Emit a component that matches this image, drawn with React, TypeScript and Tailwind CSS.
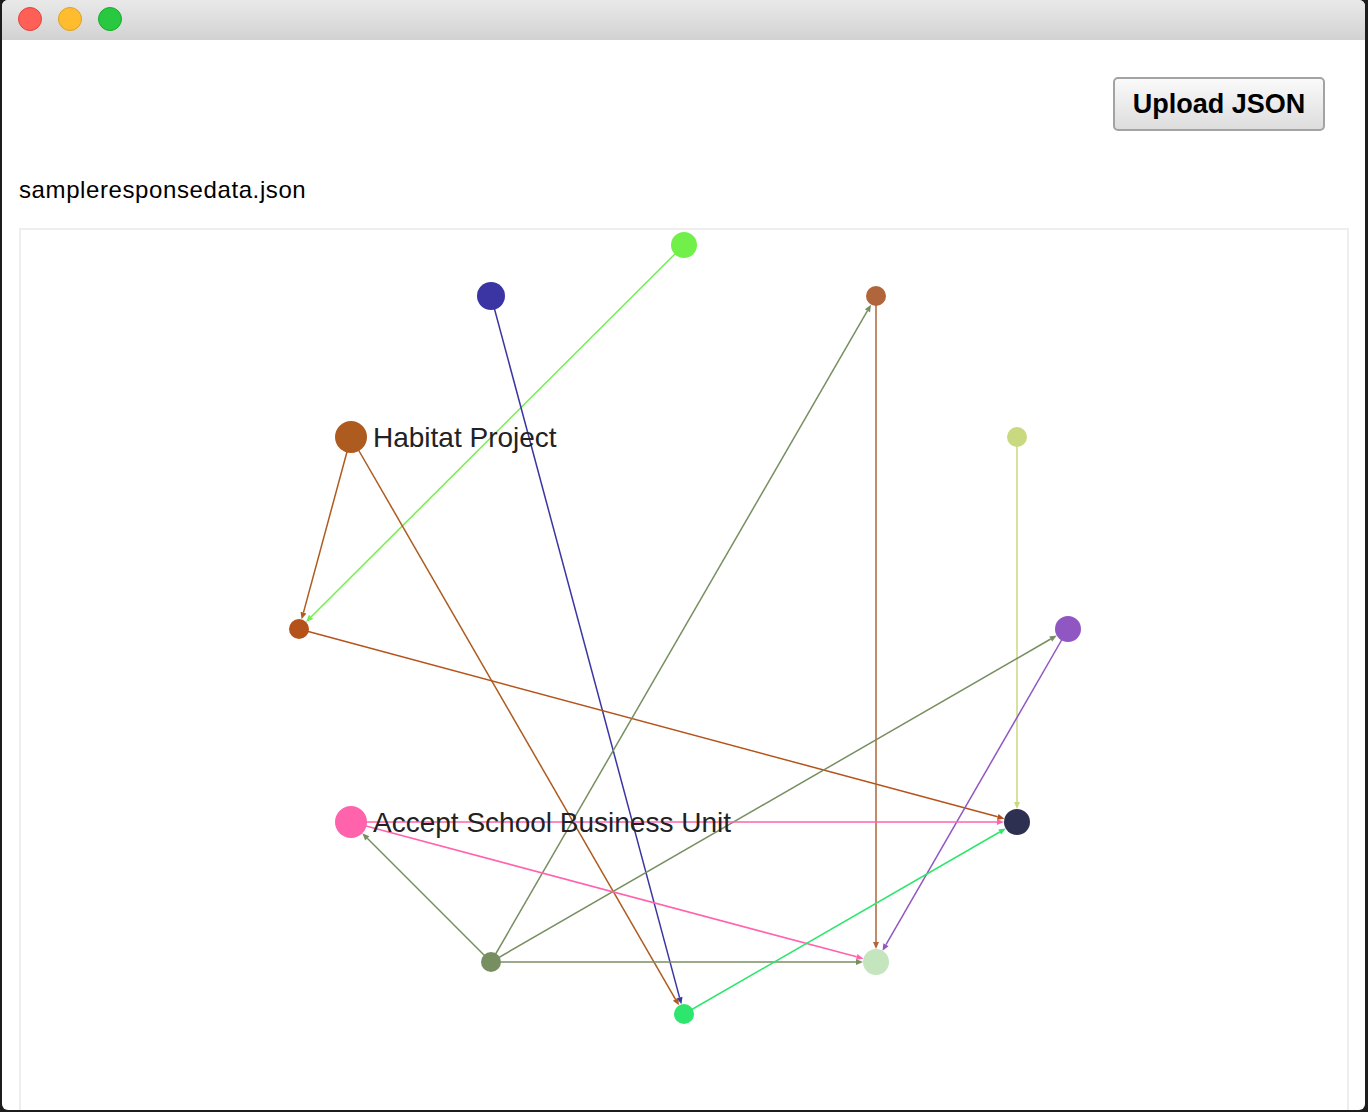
import React from 'react';

type GraphNode = { x: number; y: number; r: number; c: string; label?: string };

const nodes: GraphNode[] = [
  { x: 684, y: 245, r: 13, c: '#72f04a' },
  { x: 491, y: 296, r: 14, c: '#3a35a3' },
  { x: 876, y: 296, r: 10, c: '#b0653a' },
  { x: 351, y: 437, r: 16, c: '#ad5b1f', label: 'Habitat Project' },
  { x: 1017, y: 437, r: 10, c: '#c9d97f' },
  { x: 299, y: 629, r: 10, c: '#b5521a' },
  { x: 1068, y: 629, r: 13, c: '#9056c1' },
  { x: 351, y: 822, r: 16, c: '#ff63ac', label: 'Accept School Business Unit' },
  { x: 1017, y: 822, r: 13, c: '#2d3050' },
  { x: 491, y: 962, r: 10, c: '#778f60' },
  { x: 876, y: 962, r: 13, c: '#c5e5be' },
  { x: 684, y: 1014, r: 10, c: '#2ee66e' },
];

const edges: [number, number][] = [
  [0, 5], [1, 11], [3, 5], [3, 11], [5, 8], [2, 10], [9, 2], [4, 8],
  [6, 10], [9, 6], [9, 7], [9, 10], [7, 8], [7, 10], [11, 8],
];

const Edge: React.FC<{ from: GraphNode; to: GraphNode }> = ({ from, to }) => {
  const dx = to.x - from.x;
  const dy = to.y - from.y;
  const len = Math.hypot(dx, dy);
  const ux = dx / len;
  const uy = dy / len;
  // tip sits on the target's rim
  const tx = to.x - ux * to.r;
  const ty = to.y - uy * to.r;
  const bx = tx - ux * 7;
  const by = ty - uy * 7;
  const px = -uy * 3;
  const py = ux * 3;
  return (
    <g>
      <line x1={from.x} y1={from.y} x2={bx} y2={by} stroke={from.c} strokeWidth={1.5} />
      <polygon points={`${tx},${ty} ${bx + px},${by + py} ${bx - px},${by - py}`} fill={from.c} />
    </g>
  );
};

const Graph: React.FC = () => (
  <svg width={1326} height={900} viewBox="21 230 1326 900" className="block">
    {edges.map(([a, b], i) => (
      <Edge key={i} from={nodes[a]} to={nodes[b]} />
    ))}
    {nodes.map((n, i) => (
      <circle key={i} cx={n.x} cy={n.y} r={n.r} fill={n.c} />
    ))}
    {nodes.map((n, i) =>
      n.label ? (
        <text
          key={i}
          x={n.x + n.r + 6}
          y={n.y + 10}
          fill="#222"
          fontSize={28}
          fontFamily="'Liberation Sans', Arial, sans-serif"
        >
          {n.label}
        </text>
      ) : null
    )}
  </svg>
);

export default function App() {
  return (
    <div className="h-[1112px] bg-[#1c1c1c] pl-[2px] pr-[3px] pb-[2px] font-['Liberation_Sans',Arial,sans-serif]">
      <div className="h-full rounded-[6px] overflow-hidden bg-white flex flex-col">
        <div className="h-10 shrink-0 bg-gradient-to-b from-[#e9e9e9] to-[#d2d2d2] flex items-center pl-[16px] gap-4 pb-[3px]">
          <span className="w-6 h-6 rounded-full bg-[#fe5f57] border border-[#e0443e]" />
          <span className="w-6 h-6 rounded-full bg-[#febc2e] border border-[#dea123]" />
          <span className="w-6 h-6 rounded-full bg-[#28c840] border border-[#1aab29]" />
        </div>
        <div className="flex-1 pl-[17px] pr-[16px] overflow-hidden">
          <div className="flex justify-end pt-[37px] pr-[24px]">
            <button className="w-[212px] h-[54px] rounded-[5px] border-2 border-[#a3a3a3] bg-gradient-to-b from-[#fafafa] to-[#dddddd] text-[27px] font-bold text-black">
              Upload JSON
            </button>
          </div>
          <div className="mt-[45px] text-[24px] leading-[28px] tracking-[0.6px] text-black">
            sampleresponsedata.json
          </div>
          <div className="mt-[24px] border-2 border-[#eeeeee] h-[900px]">
            <Graph />
          </div>
        </div>
      </div>
    </div>
  );
}
